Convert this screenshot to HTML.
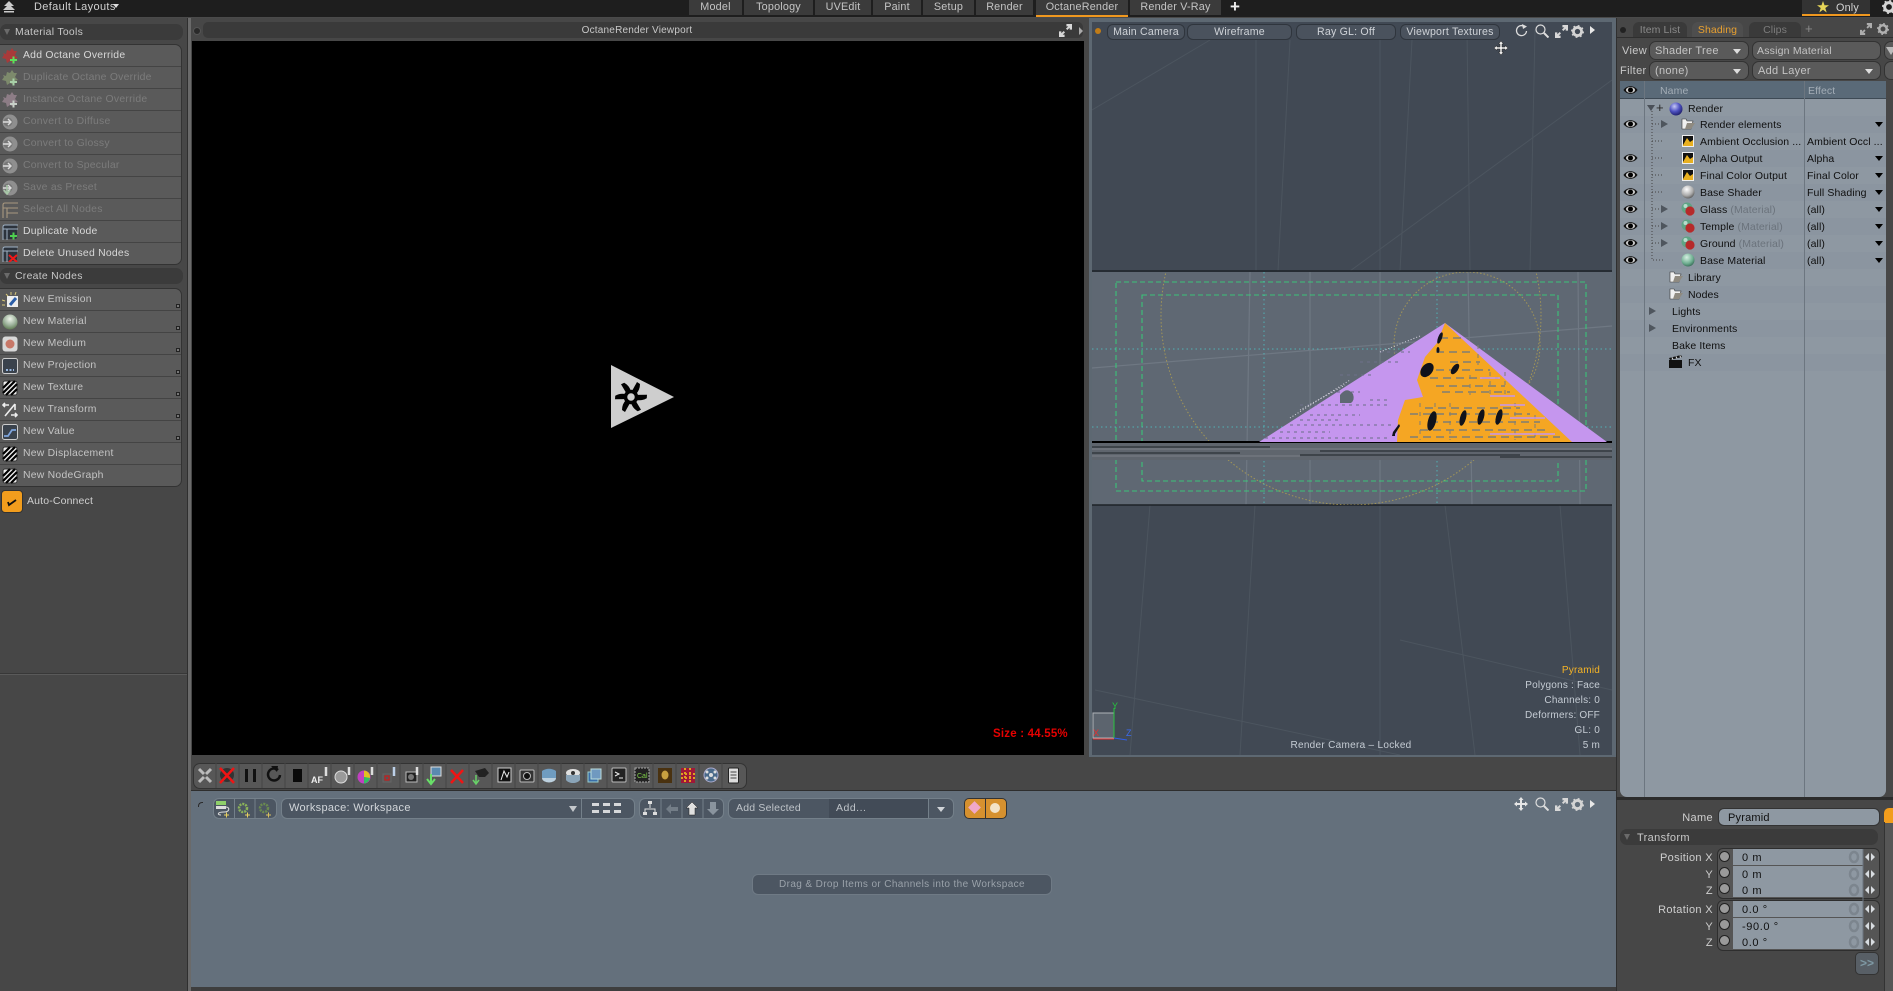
<!DOCTYPE html>
<html><head><meta charset="utf-8"><title>OctaneRender</title>
<style>
html,body{margin:0;padding:0;width:1893px;height:991px;overflow:hidden;background:#474747}
body{position:relative;font-family:"Liberation Sans",sans-serif;font-size:10.5px;color:#d0d0d0;letter-spacing:.1px}
.a{position:absolute;white-space:nowrap;margin-top:1px}
.b{position:absolute}
.k{font-size:11px;letter-spacing:.35px}
.hud{font-size:10px;letter-spacing:.2px;color:#c5ccd4;line-height:15px}
.tab{position:absolute;top:0;height:15px;background:#3b3b3b;text-align:center;line-height:15px;color:#c4c4c4;font-size:10.8px;letter-spacing:.2px}
.hd{position:absolute;left:0;width:183px;height:16px;background:#3b3b3b;border-radius:7px;line-height:18px;color:#c8c8c8;font-size:10.4px;letter-spacing:.3px}
.hd span{position:absolute;left:15px}
.tri{position:absolute;left:4px;top:5px;width:0;height:0;border-left:3.5px solid transparent;border-right:3.5px solid transparent;border-top:6px solid #6a6a6a}
.grp{position:absolute;left:-2px;width:184px;background:#5a5a5a;border:1px solid #333;border-radius:0 7px 7px 0;box-sizing:border-box}
.r{position:absolute;left:0;width:182px;height:22px;border-bottom:1px solid #444;box-sizing:border-box;line-height:22px;color:#d8d8d8;white-space:nowrap;font-size:10.4px;letter-spacing:.25px}
.r span{position:absolute;left:24px}
.r.d{color:#7c7c7c}
.r.l{color:#c4c4c4}
.r svg{position:absolute;left:3px;top:3px}
.r i{position:absolute;right:1px;bottom:2px;width:2px;height:2px;border:1px solid #222;background:#777}
.pill{position:absolute;height:14px;background:#4a525d;border:1px solid #2f353d;border-radius:6px;text-align:center;line-height:15px;color:#cfd3d8;box-sizing:content-box;font-size:10.6px;letter-spacing:.2px}
.dd{position:absolute;height:17px;background:#5a5a5a;border:1px solid #333;border-radius:7px;line-height:17px;color:#c4c4c4;box-sizing:content-box;font-size:11px;letter-spacing:.3px}
.dd b{position:absolute;right:7px;top:7px;border-left:4px solid transparent;border-right:4px solid transparent;border-top:5px solid #ddd}
.tr{position:absolute;left:1620px;width:266px;height:17px;line-height:16px;color:#0f0f0f}
.tr .a{line-height:16px}
.dim{color:#6b737c}
.ar{position:absolute;top:6px;border-left:4.5px solid transparent;border-right:4.5px solid transparent;border-top:5px solid #000}
.ex{position:absolute;width:0;height:0;border-top:4px solid transparent;border-bottom:4px solid transparent;border-left:7px solid #4f565e}
.dot{position:absolute;width:9px;height:9px;border-radius:50%;background:#9a9a9a;border:1px solid #222}
.vr{position:absolute;left:1733px;width:130px;height:16px;background:#8e98a2;color:#101010;line-height:18px;font-size:11px}
.vr span{position:absolute;left:9px;letter-spacing:.6px}
</style></head><body>
<svg width="0" height="0" style="position:absolute">
<defs>
<symbol id="eye" viewBox="0 0 14 10"><path d="M0 5C3 0 11 0 14 5C11 10 3 10 0 5Z" fill="#111"/><ellipse cx="7" cy="5" rx="4.6" ry="3" fill="#c8c8c8"/><circle cx="7" cy="5" r="2.5" fill="#000"/></symbol>
<symbol id="gear" viewBox="0 0 16 16"><circle cx="8" cy="8" r="5" fill="none" stroke="#d4d4d4" stroke-width="3.4"/><circle cx="8" cy="8" r="7" fill="none" stroke="#d4d4d4" stroke-width="2" stroke-dasharray="2.2 3.3"/></symbol>
<symbol id="exp" viewBox="0 0 14 14"><path d="M0 14V8H2.5V10L5 7.5L6.5 9L4 11.5H6V14ZM14 0V6H11.5V4L9 6.5L7.5 5L10 2.5H8V0Z" fill="#d8d8d8"/></symbol>
<symbol id="str" viewBox="0 0 16 16"><rect x="1" y="1" width="14" height="14" rx="2" fill="#eee" stroke="#333"/><path d="M1 8L8 1M1 13L13 1M4 15L15 4M9 15L15 9" stroke="#000" stroke-width="2.2"/></symbol>
<symbol id="conv" viewBox="0 0 16 16"><circle cx="8" cy="8" r="7.5" fill="#8f8f8f"/><circle cx="6" cy="8" r="4.5" fill="#777"/><path d="M1 8H8M6 5L9 8L6 11" stroke="#ddd" stroke-width="1.4" fill="none"/></symbol>
<symbol id="star8" viewBox="0 0 16 16"><path d="M1 5L4 6L5 2L8 3L10 0L12 3L15 3L13 7L16 10L12 11L12 15L8 13L5 15L4 11L0 10L2 7Z"/></symbol>
<symbol id="list" viewBox="0 0 16 16"><path d="M1 16V3Q1 1 3 1H16M1 6H16M5 16V6M5 11H16" fill="none" stroke="#a89880" stroke-width="1.1"/></symbol>
<symbol id="node" viewBox="0 0 16 16"><rect x="1" y="1" width="14" height="14" rx="2" fill="#2c333c"/><path d="M1 16V3Q1 1 3 1H16M1 5H16M5 16V5" fill="none" stroke="#9fb2c5" stroke-width="1"/></symbol>
<symbol id="fold" viewBox="0 0 14 12"><path d="M1 1H5L6 3H12L10 11H1Z" fill="#f0f0f0" stroke="#333" stroke-width=".6"/><path d="M4 11L6 5H14L10 11Z" fill="#8f8a80"/></symbol>
<symbol id="pic" viewBox="0 0 12 12"><rect width="12" height="12" fill="#eee"/><rect x="1" y="1" width="10" height="10" fill="#111"/><path d="M1 10L5 3L8 7L11 5V11H1Z" fill="#e8b020"/></symbol>
<symbol id="mat" viewBox="0 0 14 14"><circle cx="6" cy="6" r="5.5" fill="#5fa585"/><circle cx="4.5" cy="4" r="2" fill="#b6dccb"/><circle cx="9" cy="9" r="4.6" fill="#b62a2a"/></symbol>
<radialGradient id="gb" cx=".38" cy=".3" r=".8"><stop offset="0" stop-color="#c5c8f5"/><stop offset=".5" stop-color="#4d50c0"/><stop offset="1" stop-color="#151558"/></radialGradient>
<radialGradient id="gw" cx=".4" cy=".3" r=".8"><stop offset="0" stop-color="#fff"/><stop offset=".6" stop-color="#aaa"/><stop offset="1" stop-color="#444"/></radialGradient>
<radialGradient id="gg" cx=".4" cy=".3" r=".8"><stop offset="0" stop-color="#d6efe3"/><stop offset=".6" stop-color="#6eae90"/><stop offset="1" stop-color="#2a5a48"/></radialGradient>
<radialGradient id="gm" cx=".5" cy=".3" r=".8"><stop offset="0" stop-color="#eef4ea"/><stop offset=".5" stop-color="#9fb49e"/><stop offset="1" stop-color="#4c6a3c"/></radialGradient>
<clipPath id="band"><rect x="1092" y="272" width="520" height="233"/></clipPath>
</defs></svg>

<!-- top bar -->
<div class="b" style="left:0;top:0;width:1893px;height:17px;background:#1e1e1e;border-bottom:1px solid #4a4a4a"></div>
<svg class="b" style="left:3px;top:1px" width="12" height="12" viewBox="0 0 12 12"><path d="M6 0L11 5H8L12 9H0L4 5H1Z" fill="#ccc"/><rect x="1" y="10" width="10" height="1.5" fill="#ccc"/></svg>
<div class="a k" style="left:34px;top:0;line-height:13px;color:#d0d0d0">Default Layouts</div>
<div class="b" style="left:113px;top:4px;border-left:3.5px solid transparent;border-right:3.5px solid transparent;border-top:4px solid #ddd"></div>
<div class="tab" style="left:689px;width:53px">Model</div>
<div class="tab" style="left:744px;width:69px">Topology</div>
<div class="tab" style="left:815px;width:56px">UVEdit</div>
<div class="tab" style="left:873px;width:48px">Paint</div>
<div class="tab" style="left:923px;width:51px">Setup</div>
<div class="tab" style="left:976px;width:57px">Render</div>
<div class="tab" style="left:1036px;width:92px;border-bottom:2px solid #f0981f;height:15px">OctaneRender</div>
<div class="tab" style="left:1130px;width:91px">Render V-Ray</div>
<div class="a" style="left:1230px;top:-3px;font-size:17px;line-height:18px;color:#eee;font-weight:bold">+</div>
<div class="tab" style="left:1802px;width:68px;background:#333;border-bottom:2px solid #f0981f;height:14px;text-align:left"><span class="a" style="left:34px;top:0;color:#d4d4d4;line-height:14px">Only</span></div>
<svg class="b" style="left:1817px;top:1px" width="12" height="12" viewBox="0 0 12 12"><path d="M6 0L7.5 4.3H12L8.3 7L9.7 11.5L6 8.8L2.3 11.5L3.7 7L0 4.3H4.5Z" fill="#e6d558"/></svg>
<svg class="b" style="left:1882px;top:0" width="11" height="14"><use href="#gear" width="14" height="14"/></svg>

<!-- left panel -->
<div class="b" style="left:0;top:18px;width:187px;height:973px;background:#474747"></div>
<div class="b" style="left:187px;top:18px;width:1px;height:973px;background:#2f2f2f"></div>
<div class="b" style="left:188px;top:18px;width:3px;height:973px;background:#6a6a6a"></div>
<div class="b" style="left:0;top:673px;width:187px;height:1px;background:#383838"></div>
<div class="b" style="left:0;top:674px;width:187px;height:1px;background:#5a5a5a"></div>
<div class="hd" style="top:24px"><div class="tri"></div><span>Material Tools</span></div>
<div class="grp" style="top:44px;height:221px">
<div class="r" style="top:0"><svg width="16" height="16"><use href="#star8" width="16" height="16" fill="#a83a3a"/><path d="M8 12H15M11.5 8.5V15.5" stroke="#5be05b" stroke-width="2"/></svg><span>Add Octane Override</span></div>
<div class="r d" style="top:22px"><svg width="16" height="16"><use href="#star8" width="16" height="16" fill="#7d8a6c"/><path d="M8 12H15M11.5 8.5V15.5" stroke="#a8d0a8" stroke-width="2"/></svg><span>Duplicate Octane Override</span></div>
<div class="r d" style="top:44px"><svg width="16" height="16"><use href="#star8" width="16" height="16" fill="#8d7d86"/><path d="M8 12H15M11.5 8.5V15.5" stroke="#c8d0c8" stroke-width="2"/></svg><span>Instance Octane Override</span></div>
<div class="r d" style="top:66px"><svg width="16" height="16"><use href="#conv" width="16" height="16"/></svg><span>Convert to Diffuse</span></div>
<div class="r d" style="top:88px"><svg width="16" height="16"><use href="#conv" width="16" height="16"/></svg><span>Convert to Glossy</span></div>
<div class="r d" style="top:110px"><svg width="16" height="16"><use href="#conv" width="16" height="16"/></svg><span>Convert to Specular</span></div>
<div class="r d" style="top:132px"><svg width="16" height="16"><use href="#conv" width="16" height="16"/><path d="M5 5V13M2 10L5 14L8 10" stroke="#a8c8a8" stroke-width="1.5" fill="none"/></svg><span>Save as Preset</span></div>
<div class="r d" style="top:154px"><svg width="16" height="16"><use href="#list" width="16" height="16"/></svg><span>Select All Nodes</span></div>
<div class="r" style="top:176px"><svg width="16" height="16"><use href="#node" width="16" height="16"/><path d="M8 12H15M11.5 8.5V15.5" stroke="#4fd04f" stroke-width="2"/></svg><span>Duplicate Node</span></div>
<div class="r" style="top:198px;border:0"><svg width="16" height="16"><use href="#node" width="16" height="16"/><path d="M7 9L15 16M15 9L7 16" stroke="#f01818" stroke-width="2"/></svg><span>Delete Unused Nodes</span></div>
</div>
<div class="hd" style="top:268px"><div class="tri"></div><span>Create Nodes</span></div>
<div class="grp" style="top:288px;height:199px">
<div class="r l" style="top:0"><svg width="16" height="16"><rect x="5" y="4" width="11" height="11" fill="#eee"/><path d="M8 13L14 6" stroke="#2b5ea8" stroke-width="3"/><path d="M0 8L3 9M0 13L3 13M4 2L6 4M9 0V3M14 0L13 3" stroke="#d8c878" stroke-width="1"/></svg><span>New Emission</span><i></i></div>
<div class="r l" style="top:22px"><svg width="16" height="16"><circle cx="8" cy="8" r="7.5" fill="url(#gm)"/></svg><span>New Material</span><i></i></div>
<div class="r l" style="top:44px"><svg width="16" height="16"><rect x=".5" y=".5" width="15" height="15" rx="3" fill="#d8d8d8"/><circle cx="8" cy="8" r="4.5" fill="#c87868"/></svg><span>New Medium</span><i></i></div>
<div class="r l" style="top:66px"><svg width="16" height="16"><rect x=".5" y=".5" width="15" height="15" rx="2" fill="#3a424c" stroke="#ccc"/><path d="M4 12H12" stroke="#9ab8e0" stroke-width="2" stroke-dasharray="2 1.5"/></svg><span>New Projection</span><i></i></div>
<div class="r l" style="top:88px"><svg width="16" height="16"><use href="#str" width="16" height="16"/></svg><span>New Texture</span><i></i></div>
<div class="r l" style="top:110px"><svg width="16" height="16"><path d="M3 14L13 2M1 3H7M3 1L1 3L3 5M15 13H9M13 15L15 13L13 11M13 2V8" stroke="#eee" stroke-width="1.6" fill="none"/></svg><span>New Transform</span><i></i></div>
<div class="r l" style="top:132px"><svg width="16" height="16"><rect x=".5" y=".5" width="15" height="15" rx="2" fill="#3a424c" stroke="#ccc"/><path d="M2 12H6L10 6H14" stroke="#7ea4dc" stroke-width="1.8" fill="none"/></svg><span>New Value</span><i></i></div>
<div class="r l" style="top:154px"><svg width="16" height="16"><use href="#str" width="16" height="16"/></svg><span>New Displacement</span></div>
<div class="r l" style="top:176px;border:0"><svg width="16" height="16"><use href="#str" width="16" height="16"/></svg><span>New NodeGraph</span></div>
</div>
<div class="b" style="left:1px;top:490px;width:20px;height:21px;background:#f29d1d;border:1px solid #333;border-radius:4px"><svg width="20" height="21"><path d="M6 11L7 14L14 9" fill="none" stroke="#111" stroke-width="1.8"/></svg></div>
<div class="a" style="left:27px;top:494px;color:#cfcfcf;font-size:10.5px;letter-spacing:.15px">Auto-Connect</div>

<!-- center render viewport -->
<div class="b" style="left:191px;top:18px;width:899px;height:739px;background:#474747"></div>
<div class="b" style="left:203px;top:22px;width:880px;height:16px;background:#3a3a3a;border-radius:5px"></div>
<div class="b" style="left:193px;top:27px;width:6px;height:6px;border-radius:50%;background:#2a2a2a;border:1px solid #555"></div>
<div class="a" style="left:537px;top:22px;width:200px;text-align:center;line-height:15px;color:#c8c8c8;font-size:10px;letter-spacing:.2px">OctaneRender Viewport</div>
<svg class="b" style="left:1059px;top:24px" width="13" height="13"><use href="#exp" width="13" height="13"/></svg>
<div class="b" style="left:1079px;top:27px;border-top:4px solid transparent;border-bottom:4px solid transparent;border-left:4px solid #aaa"></div>
<div class="b" style="left:192px;top:41px;width:892px;height:714px;background:#000"></div>
<svg class="b" style="left:605px;top:360px" width="72" height="72" viewBox="0 0 72 72"><path d="M6 5V68L69 37Z" fill="#cecece"/>
<g transform="translate(26,37)"><circle r="5.5" fill="none" stroke="#000" stroke-width="3.5"/>
<g fill="#000"><path id="bl" d="M1 -6L6 -15L9 -13Q9 -7 5 -3Z"/><path d="M1 -6L6 -15L9 -13Q9 -7 5 -3Z" transform="rotate(60)"/><path d="M1 -6L6 -15L9 -13Q9 -7 5 -3Z" transform="rotate(120)"/><path d="M1 -6L6 -15L9 -13Q9 -7 5 -3Z" transform="rotate(180)"/><path d="M1 -6L6 -15L9 -13Q9 -7 5 -3Z" transform="rotate(240)"/><path d="M1 -6L6 -15L9 -13Q9 -7 5 -3Z" transform="rotate(300)"/></g></g></svg>
<div class="a" style="left:993px;top:726px;color:#e60000;font-weight:bold;font-size:11.5px;letter-spacing:.2px;line-height:15px">Size : 44.55%</div>

<!-- 3D viewport -->
<div class="b" style="left:1089px;top:18px;width:527px;height:739px;background:#5d6872"></div>
<svg class="b" style="left:1092px;top:22px" width="520" height="733" viewBox="1092 22 520 733">
<rect x="1092" y="22" width="520" height="733" fill="#414954"/>
<rect x="1092" y="272" width="520" height="233" fill="#5f6873"/>
<g stroke="#4c555f" stroke-width="1" fill="none">
<path d="M1256 40V271M1380 30V271M1290 40L1278 271M1467 30L1470 271M1535 30L1530 271M1412 40L1400 271"/>
<path d="M1350 271L1612 80M1210 40L1092 110"/>
<path d="M1380 505V755M1255 505L1240 755M1445 505L1475 755M1560 505L1580 755M1150 505L1130 755M1095 690L1400 755M1400 640L1612 690"/>
</g>
<g stroke="#6f7883" stroke-width="1.200" fill="none">
<path d="M1380 272V505M1250 272L1246 505M1310 272V505M1468 272L1472 505M1578 272L1580 505M1092 368L1612 326"/>
</g>
<path d="M1092 271H1612M1092 505H1612" stroke="#1e2228" stroke-width="1.5"/>
<g fill="none" stroke="#2fe07a" stroke-width="1.1" stroke-dasharray="5 3" opacity=".75">
<rect x="1116" y="282" width="470" height="209"/><rect x="1142" y="295" width="416" height="186"/>
</g>
<g clip-path="url(#band)" fill="none" stroke="#bfa94a" stroke-width="1" stroke-dasharray="1.5 2" opacity=".7">
<circle cx="1351" cy="315" r="190"/><circle cx="1467" cy="345" r="73"/>
</g>
<path d="M1092 349H1612M1092 427H1612M1264 272V505M1437 272V505" stroke="#4bcfd0" stroke-width="1" stroke-dasharray="1.5 3" opacity=".7"/>
<rect x="1092" y="442" width="520" height="18" fill="#5f656d"/>
<path d="M1092 442H1612" stroke="#000" stroke-width="2"/>
<path d="M1092 447H1270M1320 451H1612M1092 453H1240M1300 455H1520M1500 457H1612" stroke="#1e2226" stroke-width="1"/>
<path d="M1092 449H1612M1092 456H1300" stroke="#72777e" stroke-width="1.5"/>
<path d="M1259 442L1445 323L1607 442Z" fill="#c596ee"/>
<g stroke="#6c6f88" stroke-width="1" fill="none" stroke-dasharray="3 4">
<path d="M1330 392H1360M1300 420H1340M1310 415H1360M1370 400H1390M1340 375H1375M1280 432H1330M1380 352H1410M1360 362H1400M1300 405H1390M1265 438H1390M1290 425H1395"/>
</g>
<g stroke="#f4effa" stroke-width="1" fill="none" stroke-dasharray="1 2" opacity=".8"><path d="M1290 418L1350 380M1300 410L1345 385M1380 352L1420 336"/></g>
<path d="M1340 403V395Q1347 386 1353 394Q1355 400 1351 403Z" fill="#5f6873"/>
<path d="M1445 323L1572 442H1397L1398 420L1405 400L1423 397L1417 380L1425 357L1437 343Z" fill="#f5a623"/>
<g stroke="#7f7f74" stroke-width="1.5" stroke-dasharray="8 5" fill="none">
<path d="M1440 338H1462M1436 352H1472M1450 362H1480M1436 370H1490M1430 378H1498M1436 386H1505M1442 392H1510M1425 408H1520M1410 414H1530M1430 422H1540M1420 430H1550M1410 437H1560"/>
<path d="M1478 345V365M1490 372V395M1505 372V395M1420 403V440M1435 403V415M1450 403V440M1515 403V440M1535 415V440M1470 375V395" stroke-dasharray="4 5" stroke-width="1"/>
</g>
<g stroke="#c596ee" stroke-width="1.5" fill="none"><path d="M1490 434H1555M1510 418H1545M1500 405H1525M1480 378H1500M1490 396H1515"/></g>
<g fill="#10121a">
<ellipse cx="1427" cy="370" rx="5.5" ry="8" transform="rotate(40 1427 370)"/>
<ellipse cx="1455" cy="369" rx="3" ry="6" transform="rotate(35 1455 369)"/>
<ellipse cx="1440" cy="338" rx="2" ry="6" transform="rotate(20 1440 338)"/>
<ellipse cx="1438" cy="350" rx="1.5" ry="3"/>
<ellipse cx="1432" cy="421" rx="4" ry="10" transform="rotate(15 1432 421)"/>
<ellipse cx="1463" cy="418" rx="3" ry="8" transform="rotate(15 1463 418)"/>
<ellipse cx="1481" cy="417" rx="3" ry="8" transform="rotate(15 1481 417)"/>
<ellipse cx="1499" cy="417" rx="3" ry="8" transform="rotate(15 1499 417)"/>
<path d="M1393 432L1399 424L1400 426L1395 434V436H1392Z"/>
</g>
<!-- axis -->
<rect x="1093" y="713" width="21" height="25" fill="#5c646e" stroke="#aeb3b8" stroke-width="1"/>
<path d="M1114 738V708" stroke="#27c43e"/><path d="M1093 739H1114" stroke="#e53030"/><path d="M1114 738L1127 740" stroke="#3060e8"/>
</svg>
<div class="a" style="left:1112px;top:700px;color:#27c43e;font-size:9px">Y</div>
<div class="a" style="left:1093px;top:727px;color:#e53030;font-size:9px">X</div>
<div class="a" style="left:1126px;top:727px;color:#3b6bf0;font-size:9px">Z</div>
<div class="b" style="left:1095px;top:28px;width:6px;height:6px;border-radius:50%;background:#c07c18"></div>
<div class="pill" style="left:1107px;top:24px;width:76px">Main Camera</div>
<div class="pill" style="left:1187px;top:24px;width:103px">Wireframe</div>
<div class="pill" style="left:1296px;top:24px;width:98px">Ray GL: Off</div>
<div class="pill" style="left:1400px;top:24px;width:98px">Viewport Textures</div>
<svg class="b" style="left:1515px;top:24px" width="13" height="13" viewBox="0 0 13 13"><path d="M10 3A5 5 0 1 0 11.5 7" fill="none" stroke="#ddd" stroke-width="1.3"/><path d="M7 0L12 2.5L8 5Z" fill="#ddd"/></svg>
<svg class="b" style="left:1535px;top:24px" width="14" height="14" viewBox="0 0 14 14"><circle cx="5.5" cy="5.5" r="4.5" fill="none" stroke="#ddd" stroke-width="1.2"/><path d="M9 9L13.5 13.5" stroke="#ddd" stroke-width="2"/></svg>
<svg class="b" style="left:1555px;top:25px" width="13" height="13"><use href="#exp" width="13" height="13"/></svg>
<svg class="b" style="left:1571px;top:25px" width="13" height="13"><use href="#gear" width="13" height="13"/></svg>
<div class="b" style="left:1590px;top:26px;border-top:4.5px solid transparent;border-bottom:4.5px solid transparent;border-left:5px solid #e8e8e8"></div>
<svg class="b" style="left:1494px;top:41px" width="14" height="14" viewBox="0 0 14 14"><path d="M7 0L9.5 3H8V6H11V4.5L14 7L11 9.5V8H8V11H9.5L7 14L4.5 11H6V8H3V9.5L0 7L3 4.5V6H6V3H4.5Z" fill="#eee" stroke="#222" stroke-width=".5"/></svg>
<div class="a hud" style="right:293px;top:662px;color:#f4b326">Pyramid</div>
<div class="a hud" style="right:293px;top:677px">Polygons : Face</div>
<div class="a hud" style="right:293px;top:692px">Channels: 0</div>
<div class="a hud" style="right:293px;top:707px">Deformers: OFF</div>
<div class="a hud" style="right:293px;top:722px">GL: 0</div>
<div class="a hud" style="right:293px;top:737px">5 m</div>
<div class="a hud" style="left:1251px;top:737px;width:200px;text-align:center;letter-spacing:.3px">Render Camera – Locked</div>

<!-- toolbar -->
<div class="b" style="left:191px;top:757px;width:1425px;height:33px;background:#474747"></div>
<div class="b" style="left:193px;top:763px;width:552px;height:24px;background:#575757;border:1px solid #333;border-radius:7px"></div>
<svg class="b" style="left:193px;top:763px" width="553" height="25" viewBox="0 0 553 25">
<g stroke="#444" stroke-width="1"><path d="M23 0V25M46 0V25M69 0V25M92 0V25M115 0V25M138 0V25M161 0V25M184 0V25M207 0V25M230 0V25M253 0V25M276 0V25M299 0V25M322 0V25M345 0V25M368 0V25M391 0V25M414 0V25M437 0V25M460 0V25M483 0V25M506 0V25M529 0V25"/></g>
<path d="M6 6L11 11M18 6L13 11M6 19L11 14M18 19L13 14" stroke="#bbb" stroke-width="3"/>
<circle cx="34" cy="12" r="7" fill="#333"/><path d="M27 5L41 20M41 5L27 20" stroke="#f01414" stroke-width="2.5"/>
<rect x="52" y="6" width="3" height="13" fill="#111"/><rect x="60" y="6" width="3" height="13" fill="#111"/>
<path d="M85 7A6 6 0 1 0 87 12" fill="none" stroke="#111" stroke-width="2.5"/><path d="M78 3L85 3L84 9Z" fill="#111"/>
<rect x="100" y="6" width="9" height="13" fill="#0a0a0a"/>
<text x="118" y="20" font-size="9" font-weight="bold" fill="#eee" letter-spacing="0">AF</text><path d="M133 4V13" stroke="#ddd" stroke-width="2.5"/>
<circle cx="148" cy="14" r="6" fill="#9a9a9a" stroke="#ddd"/><path d="M156 4V12" stroke="#ddd" stroke-width="2.5"/>
<circle cx="171" cy="14" r="6.5" fill="#c040c0"/><path d="M171 14V7.5A6.5 6.5 0 0 1 177 15Z" fill="#e0c020"/><path d="M171 14L177 15A6.5 6.5 0 0 1 171 20.5Z" fill="#30c060"/><path d="M179 4V12" stroke="#ddd" stroke-width="2.5"/>
<rect x="190" y="11" width="8" height="8" fill="none" stroke="#666" stroke-width="1"/><rect x="192" y="13" width="4" height="4" fill="none" stroke="#e01010" stroke-width="1"/><path d="M201 4V13" stroke="#bcd0e8" stroke-width="2.5"/>
<rect x="213" y="9" width="11" height="10" fill="#222" stroke="#bbb"/><circle cx="218" cy="14" r="3" fill="#777"/><path d="M224 4V12" stroke="#ddd" stroke-width="2.5"/>
<rect x="238" y="4" width="10" height="9" fill="#5a8ab0" stroke="#ddd"/><path d="M238 11V20M234 16L238 21L242 16" fill="none" stroke="#68e068" stroke-width="2"/>
<g transform="translate(-4,0)">
<path d="M262 7L274 20M274 7L262 20" stroke="#f01414" stroke-width="2.5"/>
<path d="M286 8L296 5L300 10L296 14L290 14Z" fill="#222"/><path d="M287 12V20M284 17L287 21L290 17" fill="none" stroke="#68d068" stroke-width="1.5"/>
<rect x="309" y="5" width="13" height="14" fill="#111" stroke="#ccc"/><path d="M312 17L315 8L318 14L320 9" stroke="#eee" fill="none"/>
<rect x="331" y="7" width="14" height="12" rx="1" fill="#333" stroke="#bbb"/><circle cx="338" cy="13" r="3.5" fill="#111" stroke="#bbb"/>
<ellipse cx="360" cy="15" rx="7" ry="4.5" fill="#bcd0de"/><path d="M353 8C357 5 363 5 367 8V15H353Z" fill="#6f9cc0"/>
<ellipse cx="384" cy="10" rx="7" ry="4" fill="#e0e0e0"/><circle cx="384" cy="10" r="2" fill="#333"/><path d="M377 12V17C380 21 388 21 391 17V12" fill="#8aa4b8"/>
<rect x="399" y="9" width="10" height="10" fill="#3a6ea8" stroke="#9cc"/><rect x="402" y="6" width="10" height="10" fill="#7099c0" stroke="#bdd"/>
<rect x="423" y="5" width="14" height="14" rx="1" fill="#222" stroke="#bbb"/><path d="M426 9L430 11L426 13M430 15H434" stroke="#eee" fill="none"/>
<rect x="446" y="5" width="14" height="14" fill="#222" stroke="#aaa" stroke-dasharray="2 1"/><text x="448" y="15" font-size="7" fill="#7fd048" letter-spacing="0">Cal</text>
<rect x="469" y="5" width="14" height="15" fill="#4a3210"/><ellipse cx="476" cy="12" rx="3.5" ry="4.5" fill="#c8a040"/>
<rect x="492" y="5" width="14" height="15" fill="#a01838"/><path d="M492 11H506M492 15H506M496 5V20M501 5V20" stroke="#e0a020" stroke-width="2" stroke-dasharray="2 2"/>
<circle cx="522" cy="12" r="7" fill="#4a6a8a" stroke="#aac"/><circle cx="522" cy="12" r="2" fill="#ddd"/><circle cx="518" cy="9" r="1.5" fill="#ddd"/><circle cx="526" cy="9" r="1.5" fill="#ddd"/><circle cx="518" cy="15" r="1.5" fill="#ddd"/><circle cx="526" cy="15" r="1.5" fill="#ddd"/>
</g>
<g transform="translate(-2.5,0)"><rect x="538" y="5" width="10" height="15" rx="1" fill="#ddd" stroke="#222"/><path d="M540 9H546M540 12H546M540 15H546" stroke="#444"/></g>
</svg>

<!-- workspace -->
<div class="b" style="left:191px;top:790px;width:1425px;height:197px;background:#64707c;border-top:1px solid #2e2e2e;box-sizing:border-box"></div>
<div class="b" style="left:191px;top:987px;width:1425px;height:4px;background:#3e3e3e"></div>
<div class="b" style="left:198px;top:802px;width:4px;height:4px;border-left:1px solid #2a2a2a;border-top:1px solid #2a2a2a;border-radius:4px 0 0 0"></div>
<div class="b" style="left:213px;top:798px;width:62px;height:19px;background:#4c5662;border:1px solid #74808a;border-radius:6px"></div>
<svg class="b" style="left:214px;top:799px" width="62" height="20" viewBox="0 0 62 20"><rect x="2" y="2" width="10" height="4" fill="#8fd06a"/><rect x="2" y="7" width="10" height="3" fill="#ddd"/><path d="M12 8C16 8 16 13 10 13C3 13 3 16 7 16" fill="none" stroke="#ddd"/><path d="M10 16H15M12.5 13.500V18.5" stroke="#e8d060" stroke-width="1"/><circle cx="29" cy="9" r="4" fill="none" stroke="#8bb25a" stroke-width="2.5" stroke-dasharray="2 1"/><path d="M31 16H36M33.5 13.500V18.5" stroke="#e8d060"/><circle cx="50" cy="9" r="4" fill="none" stroke="#6a8a50" stroke-width="2.5" stroke-dasharray="2 1"/><path d="M52 16H57M54.5 13.500V18.5" stroke="#d8c060"/><path d="M20.5 0V20M41 0V20" stroke="#74808a"/></svg>
<div class="b" style="left:281px;top:798px;width:352px;height:19px;background:#4c5662;border:1px solid #74808a;border-radius:6px"></div>
<div class="a k" style="left:289px;top:799px;line-height:17px;color:#d2d6da;letter-spacing:.3px">Workspace: Workspace</div>
<div class="b" style="left:569px;top:806px;border-left:4px solid transparent;border-right:4px solid transparent;border-top:6px solid #c4c8cc"></div>
<div class="b" style="left:581px;top:798px;width:1px;height:21px;background:#74808a"></div>
<svg class="b" style="left:592px;top:802px" width="30" height="13"><g fill="#d6d8da"><rect x="0" y="1" width="7" height="3"/><rect x="11" y="1" width="7" height="3"/><rect x="22" y="1" width="7" height="3"/><rect x="0" y="8" width="7" height="3"/><rect x="11" y="8" width="7" height="3"/><rect x="22" y="8" width="7" height="3"/></g></svg>
<div class="b" style="left:639px;top:798px;width:83px;height:19px;background:#4c5662;border:1px solid #74808a;border-radius:6px"></div>
<svg class="b" style="left:640px;top:799px" width="84" height="20" viewBox="0 0 84 20"><path d="M21 0V20M42 0V20M63 0V20" stroke="#74808a"/><path d="M10 5V9M5 13V10H15V13" fill="none" stroke="#ddd"/><rect x="8" y="2" width="4" height="3" fill="#ddd"/><rect x="3" y="13" width="4" height="3" fill="#ddd"/><rect x="13" y="13" width="4" height="3" fill="#ddd"/><path d="M26 10L31 5V8H38V12H31V15Z" fill="#737d87"/><path d="M52 3L58 9H55V16H49V9H46Z" fill="#e0e0e0" stroke="#222" stroke-width=".5"/><path d="M73 16L79 10H76V3H70V10H67Z" fill="#8a949e"/></svg>
<div class="b" style="left:728px;top:798px;width:224px;height:19px;background:#4c5662;border:1px solid #74808a;border-radius:6px"></div>
<div class="b" style="left:829px;top:799px;width:99px;height:19px;background:#424b57"></div>
<div class="b" style="left:928px;top:799px;width:1px;height:19px;background:#74808a"></div>
<div class="a" style="left:736px;top:799px;line-height:16px;color:#bfc4c9;letter-spacing:.2px">Add Selected</div>
<div class="a" style="left:836px;top:799px;line-height:16px;color:#bfc4c9;letter-spacing:.5px">Add...</div>
<div class="b" style="left:937px;top:807px;border-left:4px solid transparent;border-right:4px solid transparent;border-top:5px solid #d0d4d8"></div>
<div class="b" style="left:964px;top:798px;width:41px;height:19px;background:#d6912f;border:1px solid #333;border-radius:5px"></div>
<div class="b" style="left:985px;top:798px;width:1px;height:21px;background:#333"></div>
<div class="b" style="left:970px;top:803px;width:9px;height:9px;background:#f0a8c8;transform:rotate(45deg)"></div>
<div class="b" style="left:990px;top:803px;width:10px;height:10px;border-radius:50%;background:#f3e3c8"></div>
<div class="a" style="left:752px;top:873px;width:298px;height:19px;background:#4c5662;border:1px solid #6f7a85;border-radius:6px;text-align:center;line-height:19px;color:#9aa2aa;font-size:10px;letter-spacing:.38px">Drag &amp; Drop Items or Channels into the Workspace</div>
<svg class="b" style="left:1514px;top:797px" width="14" height="14" viewBox="0 0 14 14"><path d="M7 0L9.5 3H8V6H11V4.5L14 7L11 9.5V8H8V11H9.5L7 14L4.5 11H6V8H3V9.5L0 7L3 4.5V6H6V3H4.5Z" fill="#e6e6e6"/></svg>
<svg class="b" style="left:1535px;top:797px" width="14" height="14" viewBox="0 0 14 14"><circle cx="5.5" cy="5.5" r="4.5" fill="none" stroke="#ddd" stroke-width="1.2"/><path d="M9 9L13.5 13.5" stroke="#ddd" stroke-width="2"/></svg>
<svg class="b" style="left:1555px;top:798px" width="13" height="13"><use href="#exp" width="13" height="13"/></svg>
<svg class="b" style="left:1571px;top:798px" width="13" height="13"><use href="#gear" width="13" height="13"/></svg>
<div class="b" style="left:1590px;top:800px;border-top:4.5px solid transparent;border-bottom:4.5px solid transparent;border-left:5px solid #e8e8e8"></div>

<!-- right panel -->
<div class="b" style="left:1616px;top:18px;width:277px;height:973px;background:#474747;border-left:1px solid #2f2f2f;box-sizing:border-box"></div>
<div class="b" style="left:1620px;top:27px;width:6px;height:6px;border-radius:50%;background:#222"></div>
<div class="b" style="left:1633px;top:22px;width:54px;height:15px;background:#3a3a3a;border-radius:6px 6px 0 0;text-align:center;line-height:16px;color:#8a8a8a">Item List</div>
<div class="b" style="left:1692px;top:22px;width:51px;height:15px;background:#4e4e4e;border-radius:6px 6px 0 0;text-align:center;line-height:16px;color:#e8a030">Shading</div>
<div class="b" style="left:1749px;top:22px;width:52px;height:15px;background:#3a3a3a;border-radius:6px 6px 0 0;text-align:center;line-height:16px;color:#7c7c7c">Clips</div>
<div class="a" style="left:1805px;top:20px;color:#8a8a8a;line-height:15px;font-size:13px">+</div>
<svg class="b" style="left:1860px;top:23px" width="12" height="12"><use href="#exp" width="12" height="12" opacity=".7"/></svg>
<svg class="b" style="left:1877px;top:23px" width="12" height="12"><use href="#gear" width="12" height="12" opacity=".75"/></svg>
<div class="b" style="left:1616px;top:37px;width:277px;height:1px;background:#2f2f2f"></div>
<div class="a k" style="left:1622px;top:42px;line-height:17px;color:#c8c8c8">View</div>
<div class="dd" style="left:1649px;top:41px;width:98px"><span class="a" style="left:5px;top:0">Shader Tree</span><b></b></div>
<div class="dd" style="left:1752px;top:41px;width:127px"><span class="a" style="left:4px;top:0;font-size:10.5px;letter-spacing:.2px">Assign Material</span></div>
<div class="dd" style="left:1884px;top:41px;width:20px"></div>
<div class="b" style="left:1886px;top:47px;border-left:5px solid transparent;border-right:5px solid transparent;border-top:8px solid #bbb"></div>
<div class="a k" style="left:1620px;top:62px;line-height:17px;color:#c8c8c8">Filter</div>
<div class="dd" style="left:1649px;top:61px;width:98px"><span class="a" style="left:5px;top:0">(none)</span><b></b></div>
<div class="dd" style="left:1752px;top:61px;width:127px"><span class="a" style="left:5px;top:0">Add Layer</span><b></b></div>
<div class="dd" style="left:1884px;top:61px;width:20px"></div>
<div class="b" style="left:1620px;top:81px;width:266px;height:716px;background:#8e98a2;border-radius:7px 0 7px 7px;border:0"></div>
<div class="b" style="left:1620px;top:81px;width:266px;height:18px;background:#5a6a78;border-bottom:1px solid #3e4a55;box-sizing:border-box"></div>
<div class="a" style="left:1660px;top:82px;line-height:16px;color:#a3adb6">Name</div>
<div class="a" style="left:1808px;top:82px;line-height:16px;color:#a3adb6">Effect</div>
<svg class="b" style="left:1623px;top:85px" width="15" height="10"><use href="#eye" width="15" height="10"/></svg>
<div class="tr" style="top:116px;background:#8b95a0"></div>
<div class="tr" style="top:150px;background:#8b95a0"></div>
<div class="tr" style="top:184px;background:#8b95a0"></div>
<div class="tr" style="top:218px;background:#8b95a0"></div>
<div class="tr" style="top:252px;background:#8b95a0"></div>
<div class="tr" style="top:286px;background:#8b95a0"></div>
<div class="tr" style="top:320px;background:#8b95a0"></div>
<div class="tr" style="top:354px;background:#8b95a0"></div>
<div class="b" style="left:1644px;top:81px;width:1px;height:716px;background:#6c7680"></div>
<div class="b" style="left:1804px;top:81px;width:1px;height:716px;background:#6c7680"></div>
<svg class="b" style="left:1645px;top:99px" width="60" height="170"><path d="M7 12V161H18M7 25H18M7 42H18M7 59H18M7 76H18M7 93H18M7 110H18M7 127H18M7 144H18" fill="none" stroke="#444" stroke-dasharray="1 2"/></svg>
<div class="b" style="left:1647px;top:105px;border-left:4px solid transparent;border-right:4px solid transparent;border-top:6px solid #4a5058"></div>
<div class="a" style="left:1656px;top:100px;line-height:14px;color:#2a2a2a;font-size:13px">+</div>
<svg class="b" style="left:1669px;top:102px" width="14" height="14"><circle cx="7" cy="7" r="6.5" fill="url(#gb)"/></svg>
<div class="a" style="left:1688px;top:100px;line-height:16px;color:#0f0f0f">Render</div>
<svg class="b" style="left:1623px;top:119px" width="15" height="10"><use href="#eye" width="15" height="10"/></svg>
<div class="ex" style="left:1661px;top:120px"></div>
<svg class="b" style="left:1681px;top:118px" width="14" height="12"><use href="#fold" width="14" height="12"/></svg>
<div class="a" style="left:1700px;top:116px;line-height:16px;color:#0f0f0f">Render elements</div>
<div class="b ar" style="left:1875px;top:122px"></div>
<svg class="b" style="left:1682px;top:135px" width="12" height="12"><use href="#pic" width="12" height="12"/></svg>
<div class="a" style="left:1700px;top:133px;line-height:16px;color:#0f0f0f">Ambient Occlusion ...</div>
<div class="a" style="left:1807px;top:133px;line-height:16px;color:#0f0f0f">Ambient Occl ...</div>
<svg class="b" style="left:1623px;top:153px" width="15" height="10"><use href="#eye" width="15" height="10"/></svg>
<svg class="b" style="left:1682px;top:152px" width="12" height="12"><use href="#pic" width="12" height="12"/></svg>
<div class="a" style="left:1700px;top:150px;line-height:16px;color:#0f0f0f">Alpha Output</div>
<div class="a" style="left:1807px;top:150px;line-height:16px;color:#0f0f0f">Alpha</div>
<div class="b ar" style="left:1875px;top:156px"></div>
<svg class="b" style="left:1623px;top:170px" width="15" height="10"><use href="#eye" width="15" height="10"/></svg>
<svg class="b" style="left:1682px;top:169px" width="12" height="12"><use href="#pic" width="12" height="12"/></svg>
<div class="a" style="left:1700px;top:167px;line-height:16px;color:#0f0f0f">Final Color Output</div>
<div class="a" style="left:1807px;top:167px;line-height:16px;color:#0f0f0f">Final Color</div>
<div class="b ar" style="left:1875px;top:173px"></div>
<svg class="b" style="left:1623px;top:187px" width="15" height="10"><use href="#eye" width="15" height="10"/></svg>
<svg class="b" style="left:1681px;top:185px" width="14" height="14"><circle cx="7" cy="7" r="6.5" fill="url(#gw)"/></svg>
<div class="a" style="left:1700px;top:184px;line-height:16px;color:#0f0f0f">Base Shader</div>
<div class="a" style="left:1807px;top:184px;line-height:16px;color:#0f0f0f">Full Shading</div>
<div class="b ar" style="left:1875px;top:190px"></div>
<svg class="b" style="left:1623px;top:204px" width="15" height="10"><use href="#eye" width="15" height="10"/></svg>
<div class="ex" style="left:1661px;top:205px"></div>
<svg class="b" style="left:1681px;top:202px" width="14" height="14"><use href="#mat" width="14" height="14"/></svg>
<div class="a" style="left:1700px;top:201px;line-height:16px;color:#0f0f0f">Glass <span class="dim">(Material)</span></div>
<div class="a" style="left:1807px;top:201px;line-height:16px;color:#0f0f0f">(all)</div>
<div class="b ar" style="left:1875px;top:207px"></div>
<svg class="b" style="left:1623px;top:221px" width="15" height="10"><use href="#eye" width="15" height="10"/></svg>
<div class="ex" style="left:1661px;top:222px"></div>
<svg class="b" style="left:1681px;top:219px" width="14" height="14"><use href="#mat" width="14" height="14"/></svg>
<div class="a" style="left:1700px;top:218px;line-height:16px;color:#0f0f0f">Temple <span class="dim">(Material)</span></div>
<div class="a" style="left:1807px;top:218px;line-height:16px;color:#0f0f0f">(all)</div>
<div class="b ar" style="left:1875px;top:224px"></div>
<svg class="b" style="left:1623px;top:238px" width="15" height="10"><use href="#eye" width="15" height="10"/></svg>
<div class="ex" style="left:1661px;top:239px"></div>
<svg class="b" style="left:1681px;top:236px" width="14" height="14"><use href="#mat" width="14" height="14"/></svg>
<div class="a" style="left:1700px;top:235px;line-height:16px;color:#0f0f0f">Ground <span class="dim">(Material)</span></div>
<div class="a" style="left:1807px;top:235px;line-height:16px;color:#0f0f0f">(all)</div>
<div class="b ar" style="left:1875px;top:241px"></div>
<svg class="b" style="left:1623px;top:255px" width="15" height="10"><use href="#eye" width="15" height="10"/></svg>
<svg class="b" style="left:1681px;top:253px" width="14" height="14"><circle cx="7" cy="7" r="6.5" fill="url(#gg)"/></svg>
<div class="a" style="left:1700px;top:252px;line-height:16px;color:#0f0f0f">Base Material</div>
<div class="a" style="left:1807px;top:252px;line-height:16px;color:#0f0f0f">(all)</div>
<div class="b ar" style="left:1875px;top:258px"></div>
<svg class="b" style="left:1669px;top:271px" width="14" height="12"><use href="#fold" width="14" height="12"/></svg>
<div class="a" style="left:1688px;top:269px;line-height:16px;color:#0f0f0f">Library</div>
<svg class="b" style="left:1669px;top:288px" width="14" height="12"><use href="#fold" width="14" height="12"/></svg>
<div class="a" style="left:1688px;top:286px;line-height:16px;color:#0f0f0f">Nodes</div>
<div class="ex" style="left:1649px;top:307px"></div>
<div class="a" style="left:1672px;top:303px;line-height:16px;color:#0f0f0f">Lights</div>
<div class="ex" style="left:1649px;top:324px"></div>
<div class="a" style="left:1672px;top:320px;line-height:16px;color:#0f0f0f">Environments</div>
<div class="a" style="left:1672px;top:337px;line-height:16px;color:#0f0f0f">Bake Items</div>
<svg class="b" style="left:1669px;top:355px" width="14" height="13" viewBox="0 0 14 13"><rect y="5" width="13" height="8" fill="#111"/><path d="M0 3L12 0L13 2L1 5Z" fill="#111"/><path d="M3 2.5L4 4.5M7 1.5L8 3.5M11 .5L11.5 2.5" stroke="#ddd"/></svg>
<div class="a" style="left:1688px;top:354px;line-height:16px;color:#0f0f0f">FX</div>

<!-- properties -->
<div class="b" style="left:1616px;top:797px;width:277px;height:3px;background:#2c2c2c"></div>
<div class="a k" style="right:180px;top:809px;line-height:16px;color:#cfcfcf">Name</div>
<div class="b" style="left:1718px;top:808px;width:160px;height:16px;background:#8e98a2;border:1px solid #333;border-radius:6px;box-sizing:content-box;line-height:16px;color:#101010"><span class="a k" style="left:9px;top:0;line-height:16px;letter-spacing:.2px">Pyramid</span></div>
<div class="b" style="left:1884px;top:808px;width:10px;height:15px;background:#f29d1d;border-radius:5px 0 0 0"></div>
<div class="b" style="left:1884px;top:823px;width:10px;height:184px;background:#565656"></div>
<div class="b" style="left:1620px;top:829px;width:258px;height:16px;background:#3b3b3b;border-radius:7px;line-height:16px;color:#c8c8c8"><div class="tri"></div><span class="a k" style="left:17px;top:0;line-height:16px">Transform</span></div>
<div class="a k" style="right:180px;top:849px;line-height:16px;color:#cfcfcf">Position X</div>
<div class="a k" style="right:180px;top:866px;line-height:16px;color:#cfcfcf">Y</div>
<div class="a k" style="right:180px;top:882px;line-height:16px;color:#cfcfcf">Z</div>
<div class="a k" style="right:180px;top:901px;line-height:16px;color:#cfcfcf">Rotation X</div>
<div class="a k" style="right:180px;top:918px;line-height:16px;color:#cfcfcf">Y</div>
<div class="a k" style="right:180px;top:934px;line-height:16px;color:#cfcfcf">Z</div>
<div class="b" style="left:1717px;top:848px;width:161px;height:49px;background:#555;border:1px solid #2e2e2e;border-radius:6px"></div>
<div class="b" style="left:1717px;top:900px;width:161px;height:49px;background:#555;border:1px solid #2e2e2e;border-radius:6px"></div>
<div class="vr" style="top:849px"><span>0 m</span></div>
<div class="vr" style="top:866px"><span>0 m</span></div>
<div class="vr" style="top:882px;height:15px"><span>0 m</span></div>
<div class="vr" style="top:901px"><span>0.0 °</span></div>
<div class="vr" style="top:918px"><span>-90.0 °</span></div>
<div class="vr" style="top:934px;height:15px"><span>0.0 °</span></div>
<div class="dot" style="left:1719px;top:851px"></div><div class="dot" style="left:1719px;top:867px"></div><div class="dot" style="left:1719px;top:883px"></div>
<div class="dot" style="left:1719px;top:903px"></div><div class="dot" style="left:1719px;top:919px"></div><div class="dot" style="left:1719px;top:935px"></div>
<svg class="b" style="left:1848px;top:849px" width="30" height="100" viewBox="0 0 30 100">
<g fill="none" stroke="#7c858e" stroke-width="2.5"><ellipse cx="6" cy="8" rx="4" ry="5"/><ellipse cx="6" cy="25" rx="4" ry="5"/><ellipse cx="6" cy="41" rx="4" ry="5"/><ellipse cx="6" cy="60" rx="4" ry="5"/><ellipse cx="6" cy="77" rx="4" ry="5"/><ellipse cx="6" cy="93" rx="4" ry="5"/></g>
<path d="M15 0V100" stroke="#6a747e"/>
<g fill="#d8dce0"><path d="M21 4V12L17 8ZM23 4V12L27 8ZM21 21V29L17 25ZM23 21V29L27 25ZM21 37V45L17 41ZM23 37V45L27 41ZM21 56V64L17 60ZM23 56V64L27 60ZM21 73V81L17 77ZM23 73V81L27 77ZM21 89V97L17 93ZM23 89V97L27 93Z"/></g></svg>
<div class="b" style="left:1855px;top:952px;width:22px;height:21px;background:#585f66;border:1px solid #333;border-radius:5px;text-align:center;line-height:21px;color:#7f9aa5;font-weight:bold;font-size:12px;letter-spacing:0">&gt;&gt;</div>
<div class="b" style="left:1884px;top:822px;width:9px;height:185px;border-left:1px solid #333;box-sizing:border-box"></div>
</body></html>
